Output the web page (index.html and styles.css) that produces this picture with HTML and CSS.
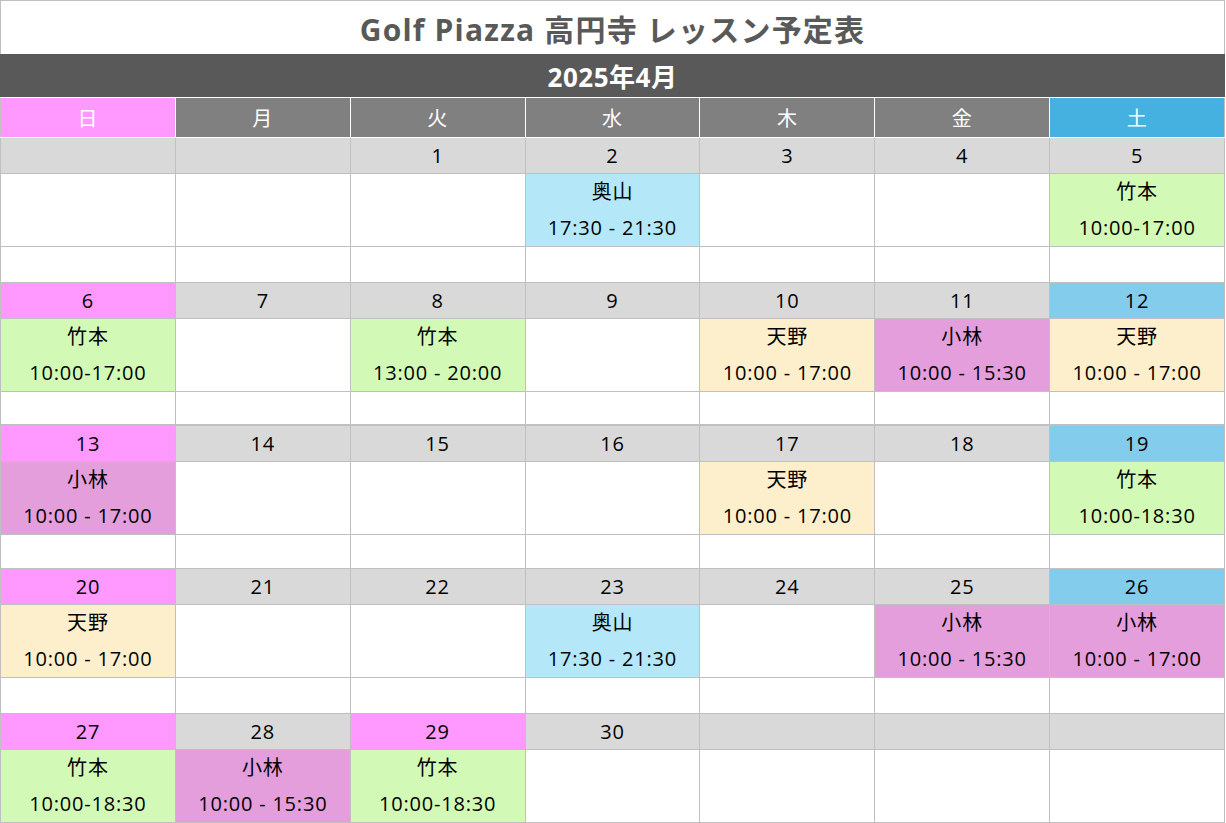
FILE: index.html
```html
<!DOCTYPE html>
<html lang="ja">
<head>
    <meta charset="UTF-8">
    <meta name="viewport" content="width=device-width, initial-scale=1.0">
    <title>Golf Piazza 高円寺 レッスン予定表</title>
    <link rel="stylesheet" href="styles.css">
</head>
<body>
    <table class="cal">
        <colgroup>
            <col><col><col><col><col><col><col>
        </colgroup>
        <tr class="title-row">
            <td colspan="7">Golf Piazza 高円寺 レッスン予定表</td>
        </tr>
        <tr class="month-row">
            <td colspan="7">2025年4月</td>
        </tr>
        <tr class="head-row">
            <td class="sun">日</td>
            <td>月</td>
            <td>火</td>
            <td>水</td>
            <td>木</td>
            <td>金</td>
            <td class="sat">土</td>
        </tr>

        <!-- 1週目 -->
        <tr class="date-row">
            <td></td><td></td><td>1</td><td>2</td><td>3</td><td>4</td><td>5</td>
        </tr>
        <tr class="lesson-row">
            <td></td>
            <td></td>
            <td></td>
            <td class="okuyama">奥山<br>17:30 - 21:30</td>
            <td></td>
            <td></td>
            <td class="takemoto">竹本<br>10:00-17:00</td>
        </tr>
        <tr class="blank-row">
            <td></td><td></td><td></td><td></td><td></td><td></td><td></td>
        </tr>

        <!-- 2週目 -->
        <tr class="date-row">
            <td class="sun">6</td><td>7</td><td>8</td><td>9</td><td>10</td><td>11</td><td class="sat">12</td>
        </tr>
        <tr class="lesson-row">
            <td class="takemoto">竹本<br>10:00-17:00</td>
            <td></td>
            <td class="takemoto">竹本<br>13:00 - 20:00</td>
            <td></td>
            <td class="amano">天野<br>10:00 - 17:00</td>
            <td class="kobayashi">小林<br>10:00 - 15:30</td>
            <td class="amano">天野<br>10:00 - 17:00</td>
        </tr>
        <tr class="blank-row thick">
            <td></td><td></td><td></td><td></td><td></td><td></td><td></td>
        </tr>

        <!-- 3週目 -->
        <tr class="date-row">
            <td class="sun">13</td><td>14</td><td>15</td><td>16</td><td>17</td><td>18</td><td class="sat">19</td>
        </tr>
        <tr class="lesson-row">
            <td class="kobayashi">小林<br>10:00 - 17:00</td>
            <td></td>
            <td></td>
            <td></td>
            <td class="amano">天野<br>10:00 - 17:00</td>
            <td></td>
            <td class="takemoto">竹本<br>10:00-18:30</td>
        </tr>
        <tr class="blank-row short">
            <td></td><td></td><td></td><td></td><td></td><td></td><td></td>
        </tr>

        <!-- 4週目 -->
        <tr class="date-row">
            <td class="sun">20</td><td>21</td><td>22</td><td>23</td><td>24</td><td>25</td><td class="sat">26</td>
        </tr>
        <tr class="lesson-row">
            <td class="amano">天野<br>10:00 - 17:00</td>
            <td></td>
            <td></td>
            <td class="okuyama">奥山<br>17:30 - 21:30</td>
            <td></td>
            <td class="kobayashi">小林<br>10:00 - 15:30</td>
            <td class="kobayashi">小林<br>10:00 - 17:00</td>
        </tr>
        <tr class="blank-row">
            <td></td><td></td><td></td><td></td><td></td><td></td><td></td>
        </tr>

        <!-- 5週目 (29日は昭和の日) -->
        <tr class="date-row">
            <td class="sun">27</td><td>28</td><td class="sun">29</td><td>30</td><td></td><td></td><td></td>
        </tr>
        <tr class="lesson-row">
            <td class="takemoto">竹本<br>10:00-18:30</td>
            <td class="kobayashi">小林<br>10:00 - 15:30</td>
            <td class="takemoto">竹本<br>10:00-18:30</td>
            <td></td>
            <td></td>
            <td></td>
            <td></td>
        </tr>
    </table>
</body>
</html>
```

FILE: styles.css
```css
body{
    margin: 0;
    background-color: #fff;
    font-family: "Open Sans", "Noto Sans CJK JP", sans-serif;
    color: #000;
}
.cal{
    width: 1225px;
    table-layout: fixed;
    border-collapse: collapse;
}
.cal td{
    padding: 0;
    border: 1px solid #c0c0c0;
    text-align: center;
    font-size: 20px;
    letter-spacing: 0.8px;
    vertical-align: middle;
}

/* タイトル */
.title-row td{
    height: 53px;
    font-size: 30px;
    letter-spacing: 1.2px;
    font-weight: bold;
    color: #595959;
    border-bottom: none;
}
.month-row td{
    height: 43px;
    background-color: #595959;
    color: #fff;
    font-size: 26px;
    letter-spacing: 0.5px;
    font-weight: bold;
    border-top: none;
    border-bottom: 1px solid #fff;
    border-left-color: #595959;
    border-right-color: #595959;
}

/* 曜日 */
.head-row td{
    height: 39px;
    background-color: #808080;
    color: #fff;
    border-color: #fff;
}
.head-row td:first-child{
    border-left-color: #c0c0c0;
}
.head-row td:last-child{
    border-right-color: #c0c0c0;
}
.head-row td.sun{
    background-color: #ff99ff;
}
.head-row td.sat{
    background-color: #45b1e0;
}

/* 日付 */
.date-row td{
    height: 35px;
    background-color: #d9d9d9;
}
.date-row td.sun{
    background-color: #ff99ff;
}
.date-row td.sat{
    background-color: #83cceb;
}

/* レッスン */
.lesson-row td{
    height: 71px;
    line-height: 36px;
}
.blank-row td{
    height: 35px;
}
.blank-row.thick td{
    height: 32px;
    border-bottom: 2px solid #c0c0c0;
}
.blank-row.short td{
    height: 33px;
}

.takemoto{
    background-color: #d3f9b6;
}
.kobayashi{
    background-color: #e39edb;
}
.amano{
    background-color: #fdefcb;
}
.okuyama{
    background-color: #b4e8f8;
}
```
